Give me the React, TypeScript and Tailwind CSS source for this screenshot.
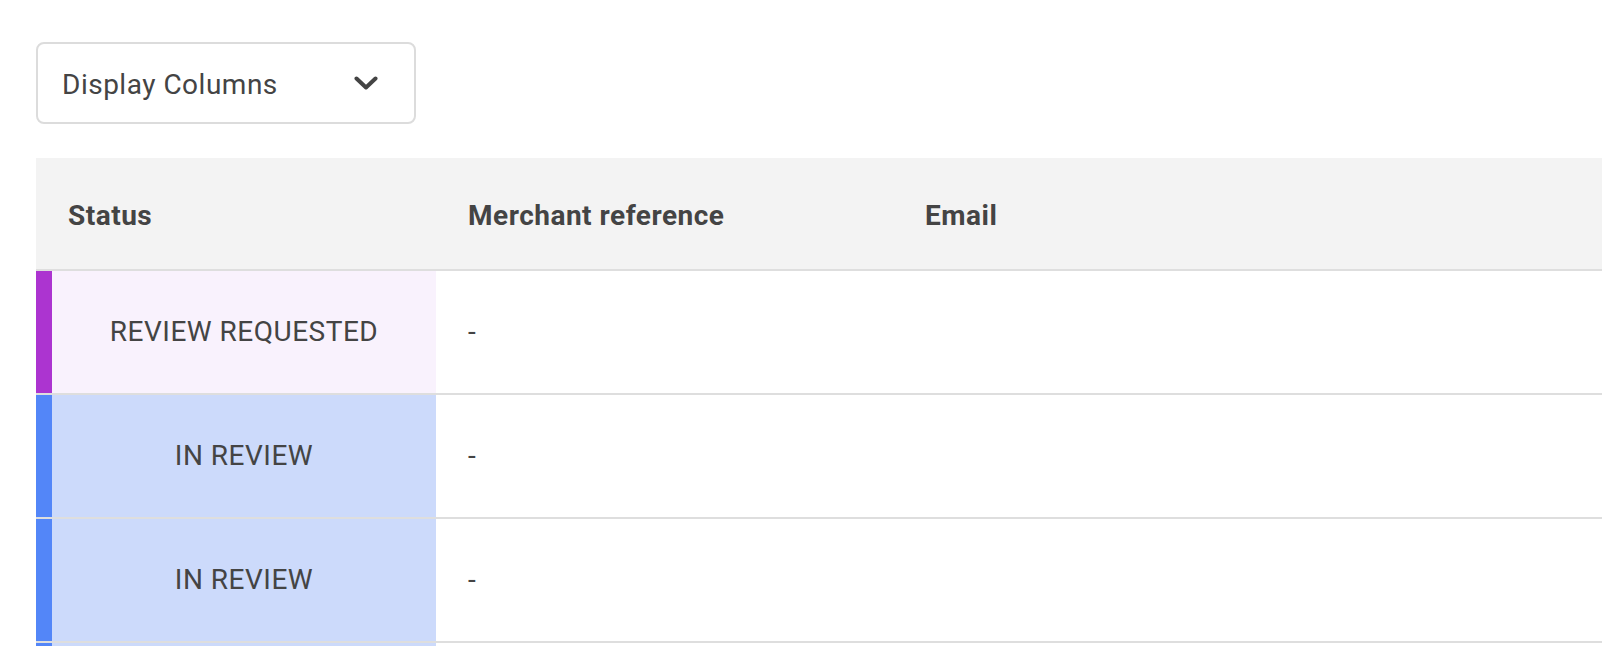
import React from 'react';

type Status = 'review_requested' | 'in_review';

interface Row {
  status: Status;
  merchantReference: string;
  email: string;
}

const rows: Row[] = [
  { status: 'review_requested', merchantReference: '-', email: '' },
  { status: 'in_review', merchantReference: '-', email: '' },
  { status: 'in_review', merchantReference: '-', email: '' },
];

const statusStyles: Record<Status, { label: string; bar: string; cell: string }> = {
  review_requested: {
    label: 'Review requested',
    bar: 'bg-[#ac34d0]',
    cell: 'bg-[#f9f2fd]',
  },
  in_review: {
    label: 'In review',
    bar: 'bg-[#5386f8]',
    cell: 'bg-[#ccdafb]',
  },
};

const ChevronDown = () => (
  <svg width="24" height="14" viewBox="0 0 24 14" fill="none" aria-hidden="true">
    <polyline
      points="2.5,2.5 12,11.5 21.5,2.5"
      stroke="#444444"
      strokeWidth="4"
      strokeLinecap="round"
      strokeLinejoin="round"
    />
  </svg>
);

const App: React.FC = () => {
  return (
    <div
      className="h-[646px] w-full overflow-hidden bg-white text-[#444444] tracking-[0.5px]"
      style={{ fontFamily: 'Roboto, "Liberation Sans", sans-serif' }}
    >
      <div className="pl-[36px] pt-[42px]">
        {/* Column picker */}
        <button
          type="button"
          className="flex h-[82px] w-[380px] items-center justify-between rounded-[8px] border-2 border-[#dcdcdc] bg-white pl-[24px] pr-[36px] text-[28px] tracking-[0.5px] text-[#444444]"
        >
          <span className="pt-[4px]">Display Columns</span>
          <ChevronDown />
        </button>

        {/* Table */}
        <div className="mt-[34px] w-[1700px]">
          <div className="flex h-[113px] items-center border-b-2 border-[#dedede] bg-[#f3f3f3] pt-[4px] text-[28px] font-bold">
            <div className="w-[400px] pl-[32px]">Status</div>
            <div className="w-[457px] pl-[32px]">Merchant reference</div>
            <div className="pl-[32px]">Email</div>
          </div>

          {rows.map((row, index) => {
            const s = statusStyles[row.status];
            return (
              <div key={index} className="flex h-[124px] border-b-2 border-[#dedede] text-[28px]">
                <div className="flex w-[400px]">
                  <div className={`w-[16px] ${s.bar}`} />
                  <div className={`flex flex-1 items-center justify-center uppercase ${s.cell}`}>
                    {s.label}
                  </div>
                </div>
                <div className="flex w-[457px] items-center pl-[32px]">{row.merchantReference}</div>
                <div className="flex items-center pl-[32px]">{row.email}</div>
              </div>
            );
          })}

          {/* next row, only its top edge is in view */}
          <div className="flex h-[124px]">
            <div className="w-[16px] bg-[#5386f8]" />
            <div className="w-[384px] bg-[#ccdafb]" />
          </div>
        </div>
      </div>
    </div>
  );
};

export default App;
